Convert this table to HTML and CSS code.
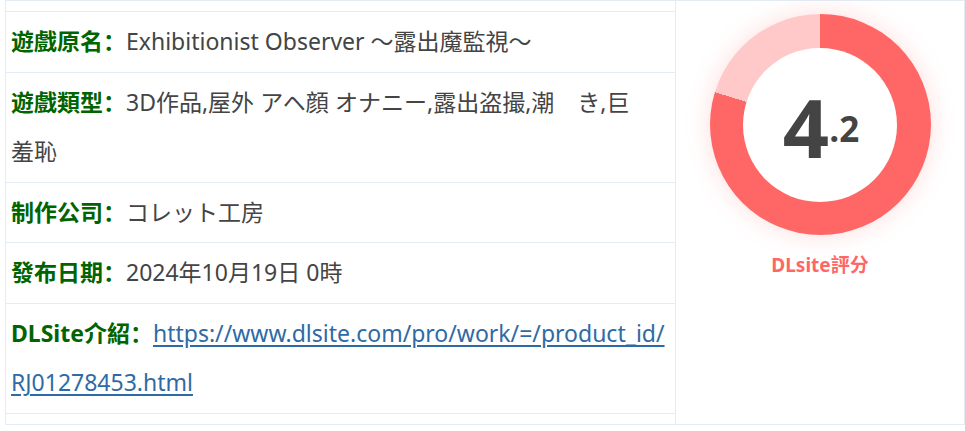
FILE: index.html
```html
<!DOCTYPE html>
<html lang="zh-CN">
<head>
<meta charset="utf-8">
<link rel="stylesheet" href="styles.css">
</head>
<body>
<div class="card">
  <div class="info">
    <div class="rows">
      <div class="row"><span class="label">遊戲原名：</span><span class="value">Exhibitionist Observer ～露出魔監視～</span></div>
      <div class="row"><span class="label">遊戲類型：</span><span class="value">3D作品,屋外<span class="redact">,</span>アヘ顔<span class="redact">,</span>オナニー,露出盗撮,潮<span class="redact">吹</span>き,巨<span class="redact">乳,</span>羞恥</span></div>
      <div class="row"><span class="label">制作公司：</span><span class="value">コレット工房</span></div>
      <div class="row"><span class="label">發布日期：</span><span class="value">2024年10月19日 0時</span></div>
      <div class="row"><span class="label">DLSite介紹：</span><a class="link" href="#">https://www.dlsite.com/pro/work/=/product_id/<wbr>RJ01278453.html</a></div>
    </div>
  </div>
  <div class="score">
    <div class="donut">
      <div class="donut-hole">
        <span class="score-int">4</span><span class="score-dec">.2</span>
      </div>
    </div>
    <div class="score-label">DLsite評分</div>
  </div>
</div>
</body>
</html>
```

FILE: styles.css
```css
* { box-sizing: border-box; }
html, body { margin: 0; padding: 0; background: #fff; }
body {
  font-family: "Noto Sans", "Noto Sans CJK SC", sans-serif;
  color: #444;
}
.card {
  margin-left: 5px;
  width: 960px;
  height: 425px;
  border: 1px solid #e3ecf5;
  display: flex;
}
.info {
  width: 669px;
  padding: 10px 0;
}
.rows {
  border-top: 1px solid #e3ecf5;
  border-bottom: 1px solid #e3ecf5;
}
.row {
  padding: 5px 5px;
  font-size: 23px;
  line-height: 49.5px;
}
.row + .row { border-top: 1px solid #e3ecf5; }
.label {
  font-weight: bold;
  color: #006400;
}
.value { color: #444; }
.redact { color: #fff; }
.link {
  color: #2e6aa5;
  text-decoration: underline;
  text-underline-offset: 3px;
}
.score {
  flex: 1;
  border-left: 1px solid #e3ecf5;
  display: flex;
  flex-direction: column;
  align-items: center;
  padding-top: 13px;
}
.donut {
  width: 221px;
  height: 221px;
  border-radius: 50%;
  background: conic-gradient(#ff6666 0deg 287deg, #ffc9c9 287deg 360deg);
  box-shadow: 0 0 24px rgba(255, 102, 102, 0.22);
  display: flex;
  align-items: center;
  justify-content: center;
}
.donut-hole {
  width: 154px;
  height: 154px;
  border-radius: 50%;
  background: #fff;
  text-align: center;
  font-family: "Open Sans", "DejaVu Sans", sans-serif;
  font-weight: bold;
  color: #444;
  line-height: 154px;
  padding-left: 2px;
  padding-top: 2px;
}
.score-int {
  font-size: 81px;
}
.score-dec {
  font-size: 35px;
  vertical-align: 16px;
}
.score-label {
  margin-top: 15px;
  font-size: 19px;
  font-weight: bold;
  color: #ff6666;
}
```
